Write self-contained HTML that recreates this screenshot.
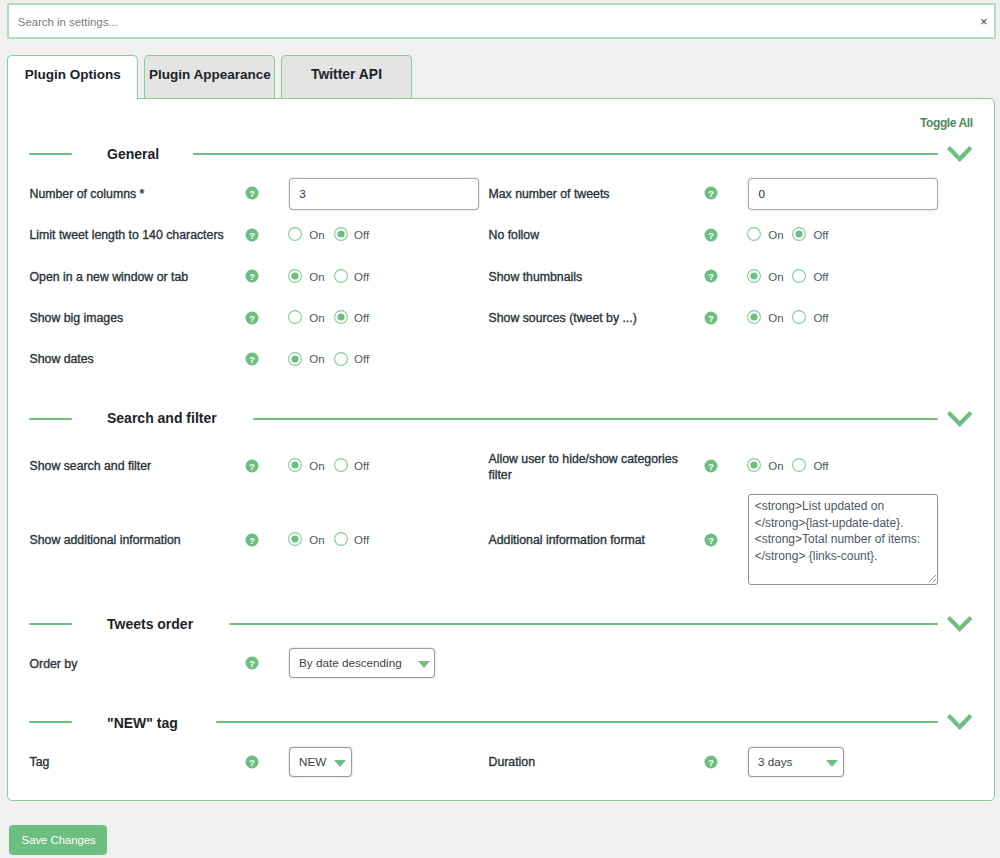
<!DOCTYPE html>
<html><head><meta charset="utf-8"><style>
html,body{margin:0;padding:0;}
body{width:1000px;height:858px;background:#f0f0f1;position:relative;overflow:hidden;font-family:"Liberation Sans",sans-serif;}
.t{position:absolute;white-space:nowrap;z-index:5;}
.search{position:absolute;left:7px;top:3px;width:985px;height:32px;background:#fff;border:2px solid #b0ddba;border-radius:2px;}
.tab{position:absolute;top:55px;height:44px;background:#e4e4e4;border:1px solid #86cd98;border-bottom:none;border-radius:5px 5px 0 0;box-sizing:border-box;}
.tab.active{background:#fff;height:45px;z-index:2;}
.panel{position:absolute;left:7px;top:98px;width:988px;height:703px;box-sizing:border-box;background:#fff;border:1px solid #86cd98;border-radius:0 5px 5px 5px;}
.tabfill{position:absolute;left:8px;top:97px;width:129px;height:3px;background:#fff;z-index:3;}
.help{position:absolute;width:13px;height:13px;border-radius:50%;background:#6cbf80;color:#fff;font-size:10px;font-weight:700;line-height:13px;text-align:center;}
.radio{position:absolute;width:14px;height:14px;border-radius:50%;border:1px solid #7fc992;box-sizing:border-box;background:#fff;}
.radio.on::after{content:"";position:absolute;left:3px;top:3px;width:6px;height:6px;border-radius:50%;background:#6cbf80;}
.hl{position:absolute;height:2px;background:#6cbf80;border-radius:1px;}
.chev{position:absolute;}
.ic{position:absolute;overflow:visible;}
.inp{position:absolute;box-sizing:border-box;background:#fff;border:1px solid #a7aaad;border-radius:4px;box-shadow:0 0 1.5px rgba(0,0,0,.35);}
.ta{position:absolute;box-sizing:border-box;background:#fff;border:1px solid #8c8f94;border-radius:3px;}
.grip{position:absolute;}
.sel{position:absolute;box-sizing:border-box;background:#fff;border:1px solid #9a9da1;border-radius:4px;box-shadow:0 0 1.5px rgba(0,0,0,.35);}
.tri{position:absolute;width:0;height:0;border-left:6.5px solid transparent;border-right:6.5px solid transparent;border-top:7.8px solid #6cbf80;}
.btn{position:absolute;left:9px;top:825px;width:98px;height:30px;background:#6cbf80;border-radius:4px;}
</style></head>
<body>
<div class="search"></div>
<div class="t" style="left:17.8px;top:14.65px;font-size:11.4px;line-height:14px;font-weight:400;color:#787c82;">Search in settings...</div>
<div class="t" style="left:980px;top:14px;font-size:13px;line-height:16px;color:#3c434a">&#215;</div>
<div class="tab active" style="left:7px;width:131px"></div>
<div class="tab" style="left:144px;width:131px"></div>
<div class="tab" style="left:281px;width:131px"></div>
<div class="panel"></div>
<div class="tabfill"></div>
<div class="t" style="left:24.7px;top:66.92px;font-size:13.5px;line-height:16px;font-weight:700;color:#1d2327;">Plugin Options</div>
<div class="t" style="left:149px;top:66.92px;font-size:13.5px;line-height:16px;font-weight:700;color:#1d2327;">Plugin Appearance</div>
<div class="t" style="left:311px;top:66.28px;font-size:13.9px;line-height:17px;font-weight:700;color:#1d2327;">Twitter API</div>
<div class="t" style="left:920px;top:116.34px;font-size:12px;line-height:14px;font-weight:700;color:#4f8a5e;letter-spacing:-0.4px">Toggle All</div>
<div class="hl" style="left:29px;top:153.4px;width:43px"></div>
<div class="t" style="left:107px;top:146.25px;font-size:14px;line-height:17px;font-weight:700;color:#1d2327;">General</div>
<div class="hl" style="left:193px;top:153.4px;width:745px"></div>
<svg class="chev" style="left:944px;top:143.4px" width="32" height="22"><polyline points="4.5,4.6 15.7,15.9 26.9,4.6" fill="none" stroke="#6cbf80" stroke-width="4.2" stroke-linecap="butt" stroke-linejoin="miter"/></svg>
<div class="t" style="left:29.5px;top:186.74px;font-size:12.3px;line-height:15px;font-weight:400;color:#2c3338;-webkit-text-stroke:0.35px #2c3338;">Number of columns *</div>
<svg class="ic" style="left:244.90px;top:186.40px" width="14" height="14"><circle cx="7" cy="7" r="6.5" fill="#6cbf80"/><text x="7" y="11" text-anchor="middle" font-family="Liberation Sans" font-weight="700" font-size="9.2" fill="#fff">?</text></svg>
<div class="inp" style="left:289px;top:178px;width:190px;height:32px"></div>
<div class="t" style="left:299.2px;top:186.85px;font-size:11.7px;line-height:14px;font-weight:400;color:#2c3338;">3</div>
<div class="t" style="left:488.5px;top:186.74px;font-size:12.3px;line-height:15px;font-weight:400;color:#2c3338;-webkit-text-stroke:0.35px #2c3338;">Max number of tweets</div>
<svg class="ic" style="left:704.40px;top:186.40px" width="14" height="14"><circle cx="7" cy="7" r="6.5" fill="#6cbf80"/><text x="7" y="11" text-anchor="middle" font-family="Liberation Sans" font-weight="700" font-size="9.2" fill="#fff">?</text></svg>
<div class="inp" style="left:748px;top:178px;width:190px;height:32px"></div>
<div class="t" style="left:758.5px;top:186.85px;font-size:11.7px;line-height:14px;font-weight:400;color:#2c3338;">0</div>
<div class="t" style="left:29.5px;top:227.94px;font-size:12.3px;line-height:15px;font-weight:400;color:#2c3338;-webkit-text-stroke:0.35px #2c3338;">Limit tweet length to 140 characters</div>
<svg class="ic" style="left:244.90px;top:227.60px" width="14" height="14"><circle cx="7" cy="7" r="6.5" fill="#6cbf80"/><text x="7" y="11" text-anchor="middle" font-family="Liberation Sans" font-weight="700" font-size="9.2" fill="#fff">?</text></svg>
<svg class="ic" style="left:288.00px;top:227.10px" width="14" height="14"><circle cx="7" cy="7" r="6.4" fill="#fff" stroke="#85cb97" stroke-width="1.1"/></svg>
<div class="t" style="left:309.3px;top:227.92px;font-size:11.5px;line-height:14px;font-weight:400;color:#50575e;">On</div>
<svg class="ic" style="left:333.80px;top:227.10px" width="14" height="14"><circle cx="7" cy="7" r="6.4" fill="#fff" stroke="#85cb97" stroke-width="1.1"/><circle cx="7" cy="7" r="3.6" fill="#6cbf80"/></svg>
<div class="t" style="left:354.0px;top:227.92px;font-size:11.5px;line-height:14px;font-weight:400;color:#50575e;">Off</div>
<div class="t" style="left:488.5px;top:227.94px;font-size:12.3px;line-height:15px;font-weight:400;color:#2c3338;-webkit-text-stroke:0.35px #2c3338;">No follow</div>
<svg class="ic" style="left:704.40px;top:227.60px" width="14" height="14"><circle cx="7" cy="7" r="6.5" fill="#6cbf80"/><text x="7" y="11" text-anchor="middle" font-family="Liberation Sans" font-weight="700" font-size="9.2" fill="#fff">?</text></svg>
<svg class="ic" style="left:747.30px;top:227.10px" width="14" height="14"><circle cx="7" cy="7" r="6.4" fill="#fff" stroke="#85cb97" stroke-width="1.1"/></svg>
<div class="t" style="left:768.3px;top:227.92px;font-size:11.5px;line-height:14px;font-weight:400;color:#50575e;">On</div>
<svg class="ic" style="left:792.00px;top:227.10px" width="14" height="14"><circle cx="7" cy="7" r="6.4" fill="#fff" stroke="#85cb97" stroke-width="1.1"/><circle cx="7" cy="7" r="3.6" fill="#6cbf80"/></svg>
<div class="t" style="left:813.4px;top:227.92px;font-size:11.5px;line-height:14px;font-weight:400;color:#50575e;">Off</div>
<div class="t" style="left:29.5px;top:269.74px;font-size:12.3px;line-height:15px;font-weight:400;color:#2c3338;-webkit-text-stroke:0.35px #2c3338;">Open in a new window or tab</div>
<svg class="ic" style="left:244.90px;top:269.40px" width="14" height="14"><circle cx="7" cy="7" r="6.5" fill="#6cbf80"/><text x="7" y="11" text-anchor="middle" font-family="Liberation Sans" font-weight="700" font-size="9.2" fill="#fff">?</text></svg>
<svg class="ic" style="left:288.00px;top:268.90px" width="14" height="14"><circle cx="7" cy="7" r="6.4" fill="#fff" stroke="#85cb97" stroke-width="1.1"/><circle cx="7" cy="7" r="3.6" fill="#6cbf80"/></svg>
<div class="t" style="left:309.3px;top:269.72px;font-size:11.5px;line-height:14px;font-weight:400;color:#50575e;">On</div>
<svg class="ic" style="left:333.80px;top:268.90px" width="14" height="14"><circle cx="7" cy="7" r="6.4" fill="#fff" stroke="#85cb97" stroke-width="1.1"/></svg>
<div class="t" style="left:354.0px;top:269.72px;font-size:11.5px;line-height:14px;font-weight:400;color:#50575e;">Off</div>
<div class="t" style="left:488.5px;top:269.74px;font-size:12.3px;line-height:15px;font-weight:400;color:#2c3338;-webkit-text-stroke:0.35px #2c3338;">Show thumbnails</div>
<svg class="ic" style="left:704.40px;top:269.40px" width="14" height="14"><circle cx="7" cy="7" r="6.5" fill="#6cbf80"/><text x="7" y="11" text-anchor="middle" font-family="Liberation Sans" font-weight="700" font-size="9.2" fill="#fff">?</text></svg>
<svg class="ic" style="left:747.30px;top:268.90px" width="14" height="14"><circle cx="7" cy="7" r="6.4" fill="#fff" stroke="#85cb97" stroke-width="1.1"/><circle cx="7" cy="7" r="3.6" fill="#6cbf80"/></svg>
<div class="t" style="left:768.3px;top:269.72px;font-size:11.5px;line-height:14px;font-weight:400;color:#50575e;">On</div>
<svg class="ic" style="left:792.00px;top:268.90px" width="14" height="14"><circle cx="7" cy="7" r="6.4" fill="#fff" stroke="#85cb97" stroke-width="1.1"/></svg>
<div class="t" style="left:813.4px;top:269.72px;font-size:11.5px;line-height:14px;font-weight:400;color:#50575e;">Off</div>
<div class="t" style="left:29.5px;top:311.04px;font-size:12.3px;line-height:15px;font-weight:400;color:#2c3338;-webkit-text-stroke:0.35px #2c3338;">Show big images</div>
<svg class="ic" style="left:244.90px;top:310.70px" width="14" height="14"><circle cx="7" cy="7" r="6.5" fill="#6cbf80"/><text x="7" y="11" text-anchor="middle" font-family="Liberation Sans" font-weight="700" font-size="9.2" fill="#fff">?</text></svg>
<svg class="ic" style="left:288.00px;top:310.20px" width="14" height="14"><circle cx="7" cy="7" r="6.4" fill="#fff" stroke="#85cb97" stroke-width="1.1"/></svg>
<div class="t" style="left:309.3px;top:311.02px;font-size:11.5px;line-height:14px;font-weight:400;color:#50575e;">On</div>
<svg class="ic" style="left:333.80px;top:310.20px" width="14" height="14"><circle cx="7" cy="7" r="6.4" fill="#fff" stroke="#85cb97" stroke-width="1.1"/><circle cx="7" cy="7" r="3.6" fill="#6cbf80"/></svg>
<div class="t" style="left:354.0px;top:311.02px;font-size:11.5px;line-height:14px;font-weight:400;color:#50575e;">Off</div>
<div class="t" style="left:488.5px;top:311.04px;font-size:12.3px;line-height:15px;font-weight:400;color:#2c3338;-webkit-text-stroke:0.35px #2c3338;">Show sources (tweet by ...)</div>
<svg class="ic" style="left:704.40px;top:310.70px" width="14" height="14"><circle cx="7" cy="7" r="6.5" fill="#6cbf80"/><text x="7" y="11" text-anchor="middle" font-family="Liberation Sans" font-weight="700" font-size="9.2" fill="#fff">?</text></svg>
<svg class="ic" style="left:747.30px;top:310.20px" width="14" height="14"><circle cx="7" cy="7" r="6.4" fill="#fff" stroke="#85cb97" stroke-width="1.1"/><circle cx="7" cy="7" r="3.6" fill="#6cbf80"/></svg>
<div class="t" style="left:768.3px;top:311.02px;font-size:11.5px;line-height:14px;font-weight:400;color:#50575e;">On</div>
<svg class="ic" style="left:792.00px;top:310.20px" width="14" height="14"><circle cx="7" cy="7" r="6.4" fill="#fff" stroke="#85cb97" stroke-width="1.1"/></svg>
<div class="t" style="left:813.4px;top:311.02px;font-size:11.5px;line-height:14px;font-weight:400;color:#50575e;">Off</div>
<div class="t" style="left:29.5px;top:352.34px;font-size:12.3px;line-height:15px;font-weight:400;color:#2c3338;-webkit-text-stroke:0.35px #2c3338;">Show dates</div>
<svg class="ic" style="left:244.90px;top:352.00px" width="14" height="14"><circle cx="7" cy="7" r="6.5" fill="#6cbf80"/><text x="7" y="11" text-anchor="middle" font-family="Liberation Sans" font-weight="700" font-size="9.2" fill="#fff">?</text></svg>
<svg class="ic" style="left:288.00px;top:351.50px" width="14" height="14"><circle cx="7" cy="7" r="6.4" fill="#fff" stroke="#85cb97" stroke-width="1.1"/><circle cx="7" cy="7" r="3.6" fill="#6cbf80"/></svg>
<div class="t" style="left:309.3px;top:352.32px;font-size:11.5px;line-height:14px;font-weight:400;color:#50575e;">On</div>
<svg class="ic" style="left:333.80px;top:351.50px" width="14" height="14"><circle cx="7" cy="7" r="6.4" fill="#fff" stroke="#85cb97" stroke-width="1.1"/></svg>
<div class="t" style="left:354.0px;top:352.32px;font-size:11.5px;line-height:14px;font-weight:400;color:#50575e;">Off</div>
<div class="hl" style="left:29px;top:417.6px;width:43px"></div>
<div class="t" style="left:107px;top:410.45px;font-size:14px;line-height:17px;font-weight:700;color:#1d2327;">Search and filter</div>
<div class="hl" style="left:253px;top:417.6px;width:685px"></div>
<svg class="chev" style="left:944px;top:407.6px" width="32" height="22"><polyline points="4.5,4.6 15.7,15.9 26.9,4.6" fill="none" stroke="#6cbf80" stroke-width="4.2" stroke-linecap="butt" stroke-linejoin="miter"/></svg>
<div class="t" style="left:29.5px;top:459.24px;font-size:12.3px;line-height:15px;font-weight:400;color:#2c3338;-webkit-text-stroke:0.35px #2c3338;">Show search and filter</div>
<svg class="ic" style="left:244.90px;top:458.90px" width="14" height="14"><circle cx="7" cy="7" r="6.5" fill="#6cbf80"/><text x="7" y="11" text-anchor="middle" font-family="Liberation Sans" font-weight="700" font-size="9.2" fill="#fff">?</text></svg>
<svg class="ic" style="left:288.00px;top:458.40px" width="14" height="14"><circle cx="7" cy="7" r="6.4" fill="#fff" stroke="#85cb97" stroke-width="1.1"/><circle cx="7" cy="7" r="3.6" fill="#6cbf80"/></svg>
<div class="t" style="left:309.3px;top:459.22px;font-size:11.5px;line-height:14px;font-weight:400;color:#50575e;">On</div>
<svg class="ic" style="left:333.80px;top:458.40px" width="14" height="14"><circle cx="7" cy="7" r="6.4" fill="#fff" stroke="#85cb97" stroke-width="1.1"/></svg>
<div class="t" style="left:354.0px;top:459.22px;font-size:11.5px;line-height:14px;font-weight:400;color:#50575e;">Off</div>
<div class="t" style="left:488.5px;top:452.24px;font-size:12.3px;line-height:15px;font-weight:400;color:#2c3338;-webkit-text-stroke:0.35px #2c3338;">Allow user to hide/show categories</div>
<div class="t" style="left:488.5px;top:467.54px;font-size:12.3px;line-height:15px;font-weight:400;color:#2c3338;-webkit-text-stroke:0.35px #2c3338;">filter</div>
<svg class="ic" style="left:704.40px;top:458.90px" width="14" height="14"><circle cx="7" cy="7" r="6.5" fill="#6cbf80"/><text x="7" y="11" text-anchor="middle" font-family="Liberation Sans" font-weight="700" font-size="9.2" fill="#fff">?</text></svg>
<svg class="ic" style="left:747.30px;top:458.40px" width="14" height="14"><circle cx="7" cy="7" r="6.4" fill="#fff" stroke="#85cb97" stroke-width="1.1"/><circle cx="7" cy="7" r="3.6" fill="#6cbf80"/></svg>
<div class="t" style="left:768.3px;top:459.22px;font-size:11.5px;line-height:14px;font-weight:400;color:#50575e;">On</div>
<svg class="ic" style="left:792.00px;top:458.40px" width="14" height="14"><circle cx="7" cy="7" r="6.4" fill="#fff" stroke="#85cb97" stroke-width="1.1"/></svg>
<div class="t" style="left:813.4px;top:459.22px;font-size:11.5px;line-height:14px;font-weight:400;color:#50575e;">Off</div>
<div class="t" style="left:29.5px;top:532.94px;font-size:12.3px;line-height:15px;font-weight:400;color:#2c3338;-webkit-text-stroke:0.35px #2c3338;">Show additional information</div>
<svg class="ic" style="left:244.90px;top:532.60px" width="14" height="14"><circle cx="7" cy="7" r="6.5" fill="#6cbf80"/><text x="7" y="11" text-anchor="middle" font-family="Liberation Sans" font-weight="700" font-size="9.2" fill="#fff">?</text></svg>
<svg class="ic" style="left:288.00px;top:532.10px" width="14" height="14"><circle cx="7" cy="7" r="6.4" fill="#fff" stroke="#85cb97" stroke-width="1.1"/><circle cx="7" cy="7" r="3.6" fill="#6cbf80"/></svg>
<div class="t" style="left:309.3px;top:532.92px;font-size:11.5px;line-height:14px;font-weight:400;color:#50575e;">On</div>
<svg class="ic" style="left:333.80px;top:532.10px" width="14" height="14"><circle cx="7" cy="7" r="6.4" fill="#fff" stroke="#85cb97" stroke-width="1.1"/></svg>
<div class="t" style="left:354.0px;top:532.92px;font-size:11.5px;line-height:14px;font-weight:400;color:#50575e;">Off</div>
<div class="t" style="left:488.5px;top:532.94px;font-size:12.3px;line-height:15px;font-weight:400;color:#2c3338;-webkit-text-stroke:0.35px #2c3338;">Additional information format</div>
<svg class="ic" style="left:704.40px;top:532.60px" width="14" height="14"><circle cx="7" cy="7" r="6.5" fill="#6cbf80"/><text x="7" y="11" text-anchor="middle" font-family="Liberation Sans" font-weight="700" font-size="9.2" fill="#fff">?</text></svg>
<div class="ta" style="left:748px;top:494px;width:190px;height:91px"></div>
<div class="t" style="left:754.7px;top:498.64px;font-size:12px;line-height:14px;font-weight:400;color:#50575e;">&lt;strong&gt;List updated on</div>
<div class="t" style="left:754.7px;top:515.54px;font-size:12px;line-height:14px;font-weight:400;color:#50575e;">&lt;/strong&gt;{last-update-date}.</div>
<div class="t" style="left:754.7px;top:532.44px;font-size:12px;line-height:14px;font-weight:400;color:#50575e;">&lt;strong&gt;Total number of items:</div>
<div class="t" style="left:754.7px;top:549.34px;font-size:12px;line-height:14px;font-weight:400;color:#50575e;">&lt;/strong&gt; {links-count}.</div>
<svg class="grip" style="left:927px;top:573px" width="10" height="10"><path d="M9 2 L2 9 M9 6 L6 9" stroke="#8c8f94" stroke-width="1"/></svg>
<div class="hl" style="left:29px;top:622.7px;width:43px"></div>
<div class="t" style="left:107px;top:616.45px;font-size:14px;line-height:17px;font-weight:700;color:#1d2327;">Tweets order</div>
<div class="hl" style="left:229px;top:622.7px;width:709px"></div>
<svg class="chev" style="left:944px;top:612.7px" width="32" height="22"><polyline points="4.5,4.6 15.7,15.9 26.9,4.6" fill="none" stroke="#6cbf80" stroke-width="4.2" stroke-linecap="butt" stroke-linejoin="miter"/></svg>
<div class="t" style="left:29.5px;top:656.54px;font-size:12.3px;line-height:15px;font-weight:400;color:#2c3338;-webkit-text-stroke:0.35px #2c3338;">Order by</div>
<svg class="ic" style="left:244.90px;top:656.20px" width="14" height="14"><circle cx="7" cy="7" r="6.5" fill="#6cbf80"/><text x="7" y="11" text-anchor="middle" font-family="Liberation Sans" font-weight="700" font-size="9.2" fill="#fff">?</text></svg>
<div class="sel" style="left:289px;top:648px;width:146px;height:30px"></div>
<div class="t" style="left:299px;top:655.95px;font-size:11.7px;line-height:14px;font-weight:400;color:#3c434a;">By date descending</div>
<div class="tri" style="left:417.5px;top:660.5px"></div>
<div class="hl" style="left:29px;top:721.2px;width:43px"></div>
<div class="t" style="left:107px;top:714.95px;font-size:14px;line-height:17px;font-weight:700;color:#1d2327;">"NEW" tag</div>
<div class="hl" style="left:216px;top:721.2px;width:722px"></div>
<svg class="chev" style="left:944px;top:711.2px" width="32" height="22"><polyline points="4.5,4.6 15.7,15.9 26.9,4.6" fill="none" stroke="#6cbf80" stroke-width="4.2" stroke-linecap="butt" stroke-linejoin="miter"/></svg>
<div class="t" style="left:29.5px;top:755.34px;font-size:12.3px;line-height:15px;font-weight:400;color:#2c3338;-webkit-text-stroke:0.35px #2c3338;">Tag</div>
<svg class="ic" style="left:244.90px;top:755.00px" width="14" height="14"><circle cx="7" cy="7" r="6.5" fill="#6cbf80"/><text x="7" y="11" text-anchor="middle" font-family="Liberation Sans" font-weight="700" font-size="9.2" fill="#fff">?</text></svg>
<div class="sel" style="left:289px;top:747px;width:63px;height:30px"></div>
<div class="t" style="left:299px;top:754.95px;font-size:11.7px;line-height:14px;font-weight:400;color:#3c434a;">NEW</div>
<div class="tri" style="left:334px;top:759.5px"></div>
<div class="t" style="left:488.5px;top:755.34px;font-size:12.3px;line-height:15px;font-weight:400;color:#2c3338;-webkit-text-stroke:0.35px #2c3338;">Duration</div>
<svg class="ic" style="left:704.40px;top:755.00px" width="14" height="14"><circle cx="7" cy="7" r="6.5" fill="#6cbf80"/><text x="7" y="11" text-anchor="middle" font-family="Liberation Sans" font-weight="700" font-size="9.2" fill="#fff">?</text></svg>
<div class="sel" style="left:748px;top:747px;width:96px;height:30px"></div>
<div class="t" style="left:758px;top:754.95px;font-size:11.7px;line-height:14px;font-weight:400;color:#3c434a;">3 days</div>
<div class="tri" style="left:826px;top:759.5px"></div>
<div class="btn"></div>
<div class="t" style="left:21.6px;top:833.28px;font-size:11.3px;line-height:14px;font-weight:400;color:#ffffff;">Save Changes</div>
</body></html>
